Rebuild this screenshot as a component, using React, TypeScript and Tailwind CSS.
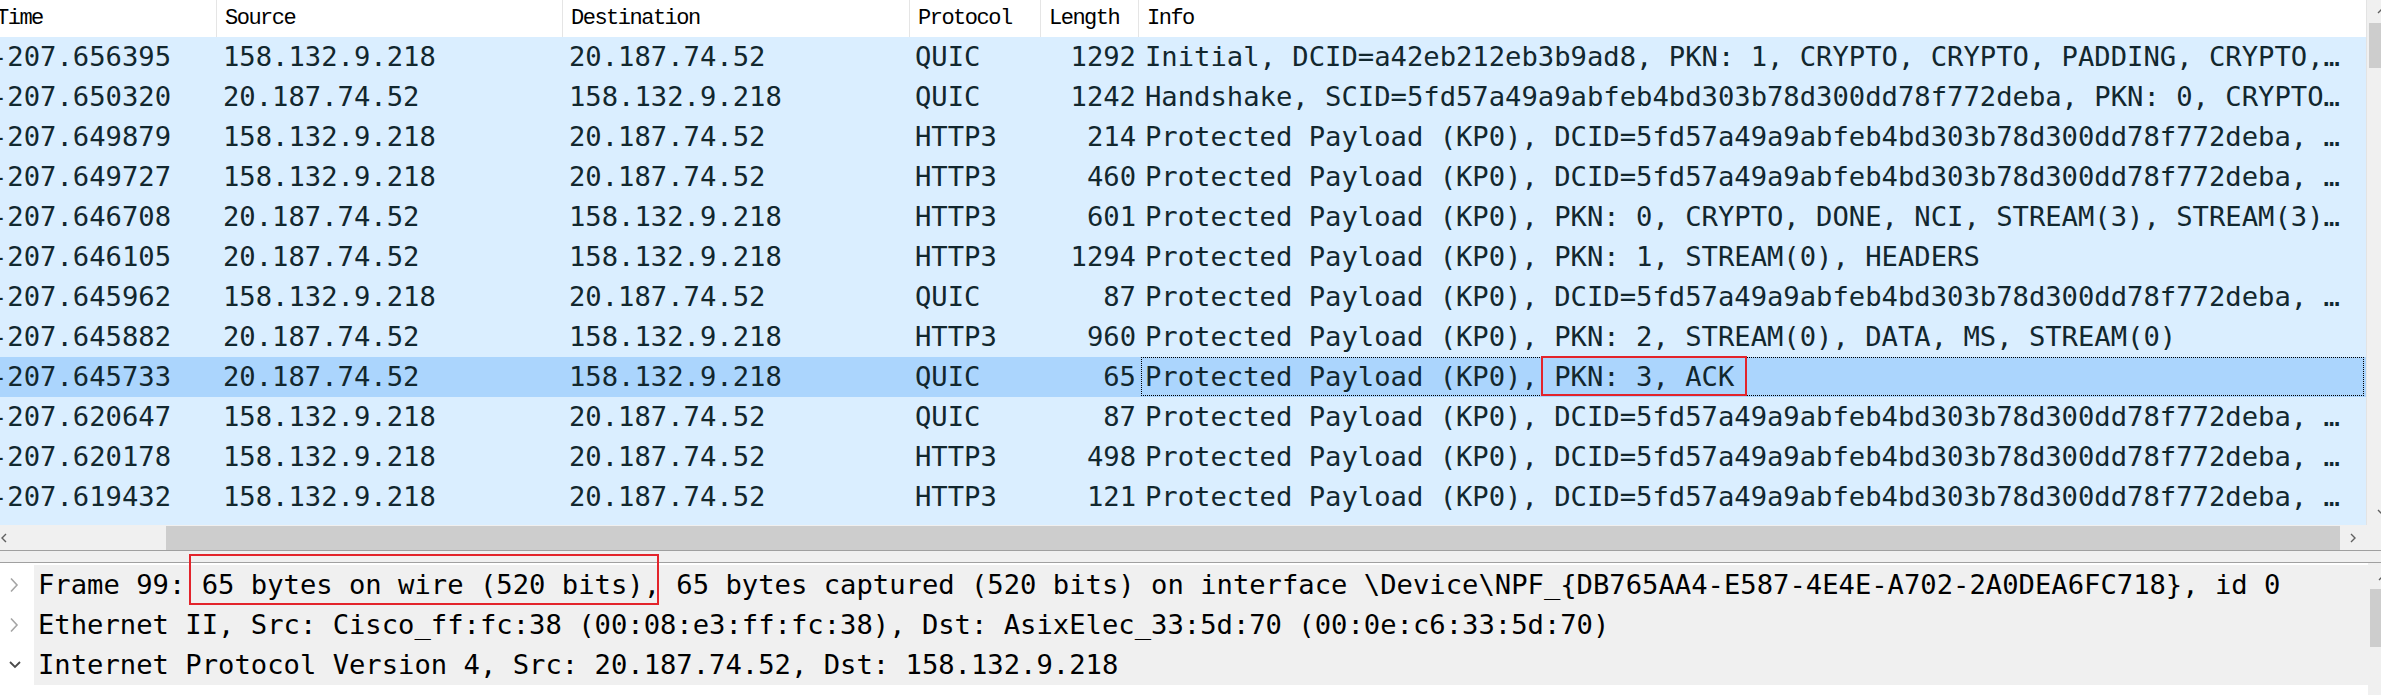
import React from 'react';

const DCID = 'Protected Payload (KP0), DCID=5fd57a49a9abfeb4bd303b78d300dd78f772deba, …';

type Pkt = { time: string; src: string; dst: string; proto: string; len: string; info: string; sel?: boolean };

const A = '158.132.9.218';
const B = '20.187.74.52';

const packets: Pkt[] = [
  { time: '-207.656395', src: A, dst: B, proto: 'QUIC', len: '1292', info: 'Initial, DCID=a42eb212eb3b9ad8, PKN: 1, CRYPTO, CRYPTO, PADDING, CRYPTO,…' },
  { time: '-207.650320', src: B, dst: A, proto: 'QUIC', len: '1242', info: 'Handshake, SCID=5fd57a49a9abfeb4bd303b78d300dd78f772deba, PKN: 0, CRYPTO…' },
  { time: '-207.649879', src: A, dst: B, proto: 'HTTP3', len: '214', info: DCID },
  { time: '-207.649727', src: A, dst: B, proto: 'HTTP3', len: '460', info: DCID },
  { time: '-207.646708', src: B, dst: A, proto: 'HTTP3', len: '601', info: 'Protected Payload (KP0), PKN: 0, CRYPTO, DONE, NCI, STREAM(3), STREAM(3)…' },
  { time: '-207.646105', src: B, dst: A, proto: 'HTTP3', len: '1294', info: 'Protected Payload (KP0), PKN: 1, STREAM(0), HEADERS' },
  { time: '-207.645962', src: A, dst: B, proto: 'QUIC', len: '87', info: DCID },
  { time: '-207.645882', src: B, dst: A, proto: 'HTTP3', len: '960', info: 'Protected Payload (KP0), PKN: 2, STREAM(0), DATA, MS, STREAM(0)' },
  { time: '-207.645733', src: B, dst: A, proto: 'QUIC', len: '65', info: 'Protected Payload (KP0), PKN: 3, ACK', sel: true },
  { time: '-207.620647', src: A, dst: B, proto: 'QUIC', len: '87', info: DCID },
  { time: '-207.620178', src: A, dst: B, proto: 'HTTP3', len: '498', info: DCID },
  { time: '-207.619432', src: A, dst: B, proto: 'HTTP3', len: '121', info: DCID },
  { time: '-207.619218', src: A, dst: B, proto: 'HTTP3', len: '87', info: DCID },
];

const details = [
  { open: false, text: 'Frame 99: 65 bytes on wire (520 bits), 65 bytes captured (520 bits) on interface \\Device\\NPF_{DB765AA4-E587-4E4E-A702-2A0DEA6FC718}, id 0' },
  { open: false, text: 'Ethernet II, Src: Cisco_ff:fc:38 (00:08:e3:ff:fc:38), Dst: AsixElec_33:5d:70 (00:0e:c6:33:5d:70)' },
  { open: true, text: 'Internet Protocol Version 4, Src: 20.187.74.52, Dst: 158.132.9.218' },
];

const Arrow = ({ d, className }: { d: string; className?: string }) => (
  <svg width="10" height="10" viewBox="0 0 10 10" className={className} fill="none" stroke="#606060" strokeWidth="1.4">
    <polyline points={d} />
  </svg>
);

function Header() {
  return (
    <div className="flex h-[37px] bg-white text-black font-['Liberation_Mono',monospace] text-[22px] tracking-[-1.5px] leading-[37px] whitespace-pre">
      <div className="w-[217px] shrink-0 overflow-hidden border-r border-[#e5e5e5]">
        <span className="inline-block -ml-[4px]">Time</span>
      </div>
      <div className="w-[346px] shrink-0 pl-[8px] border-r border-[#e5e5e5]">Source</div>
      <div className="w-[347px] shrink-0 pl-[8px] border-r border-[#e5e5e5]">Destination</div>
      <div className="w-[131px] shrink-0 pl-[8px] border-r border-[#e5e5e5]">Protocol</div>
      <div className="w-[98px] shrink-0 pl-[8px] border-r border-[#e5e5e5]">Length</div>
      <div className="flex-1 pl-[8px]">Info</div>
    </div>
  );
}

function Row({ p }: { p: Pkt }) {
  return (
    <div className={`flex h-[40px] leading-[40px] whitespace-pre ${p.sel ? 'bg-[#abd5fd]' : ''}`}>
      <div className="w-[217px] shrink-0 overflow-hidden">
        <span className="inline-block -ml-[9px]">{p.time}</span>
      </div>
      <div className="w-[346px] shrink-0 pl-[6px]">{p.src}</div>
      <div className="w-[347px] shrink-0 pl-[6px]">{p.dst}</div>
      <div className="w-[131px] shrink-0 pl-[5px]">{p.proto}</div>
      <div className="w-[98px] shrink-0 pr-[3px] text-right">{p.len}</div>
      <div className="relative flex-1 pl-[6px] overflow-hidden">
        {p.info}
        {p.sel && <div className="absolute left-[2px] right-[2px] top-0 bottom-[1px] border border-dotted border-black" />}
      </div>
    </div>
  );
}

export default function App() {
  return (
    <div className="relative w-[2381px] h-[695px] overflow-hidden bg-white flex flex-col">
      {/* packet list */}
      <div className="flex h-[525px] shrink-0 overflow-hidden">
        <div className="w-[2366px] shrink-0 overflow-hidden bg-[#daeeff] text-[#12272e] font-['DejaVu_Sans_Mono',monospace] text-[27.2px]">
          <Header />
          {packets.map((p, i) => (
            <Row key={i} p={p} />
          ))}
        </div>
        <div className="w-[30px] shrink-0 bg-[#f0f0f0] border-l border-[#e3e3e3] flex flex-col items-center">
          <Arrow d="1,7 5,3 9,7" className="mt-[6px]" />
          <div className="mt-[7px] w-[26px] h-[45px] bg-[#cdcdcd]" />
          <div className="flex-1" />
          <Arrow d="1,3 5,7 9,3" className="mb-[8px]" />
        </div>
      </div>

      {/* horizontal scrollbar */}
      <div className="flex h-[25px] shrink-0 bg-[#f0f0f0]">
        <div className="w-[24px] shrink-0 flex items-center">
          <Arrow d="7,1 3,5 7,9" className="ml-[-1px]" />
        </div>
        <div className="w-[142px] shrink-0" />
        <div className="w-[2174px] shrink-0 bg-[#cdcdcd] mt-[1px]" />
        <div className="w-[26px] shrink-0 flex items-center justify-center">
          <Arrow d="3,1 7,5 3,9" />
        </div>
        <div className="flex-1" />
      </div>

      {/* splitter */}
      <div className="h-[13px] shrink-0 bg-[#f0f0f0] border-t border-b border-[#a0a0a0]" />

      {/* packet details */}
      <div className="flex flex-1 overflow-hidden">
        <div className="w-[2368px] shrink-0 pt-[2px] text-black font-['DejaVu_Sans_Mono',monospace] text-[27.2px] leading-[40px] whitespace-pre">
          {details.map((d, i) => (
            <div key={i} className="flex h-[40px]">
              <div className="w-[34px] shrink-0 flex items-center pl-[8px]">
                {d.open ? (
                  <svg width="14" height="10" viewBox="0 0 14 10" fill="none" stroke="#4a4a4a" strokeWidth="1.8">
                    <polyline points="2,2 7,7 12,2" />
                  </svg>
                ) : (
                  <svg width="12" height="16" viewBox="0 0 12 16" fill="none" stroke="#a5a5a5" strokeWidth="1.6">
                    <polyline points="3,1.5 9,8 3,14.5" />
                  </svg>
                )}
              </div>
              <div className="flex-1 bg-[#f0f0f0] pl-[4px] overflow-hidden">{d.text}</div>
            </div>
          ))}
        </div>
        <div className="w-[30px] shrink-0 bg-[#f0f0f0] flex flex-col items-center">
          <Arrow d="1,7 5,3 9,7" className="mt-[10px]" />
          <div className="mt-[6px] w-[26px] h-[58px] bg-[#cdcdcd]" />
        </div>
      </div>

      {/* annotation boxes */}
      <div className="absolute left-[1541px] top-[356px] w-[206px] h-[40px] border-2 border-[#e3242b]" />
      <div className="absolute left-[189px] top-[554px] w-[470px] h-[51px] border-2 border-[#e3242b]" />
    </div>
  );
}
